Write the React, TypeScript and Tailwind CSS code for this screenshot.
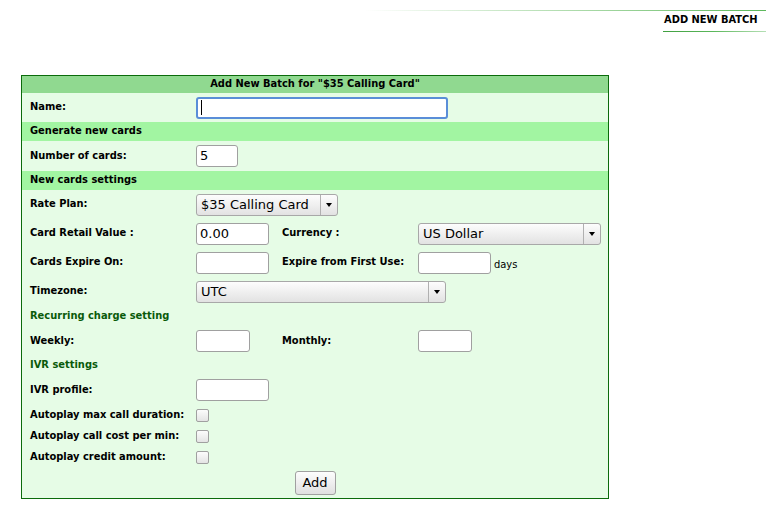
import React from "react";

const F = { fontFamily: '"DejaVu Sans Condensed", "DejaVu Sans", sans-serif' };
const FI = { fontFamily: '"DejaVu Sans", sans-serif' };

function Label({ children }: { children: React.ReactNode }) {
  return (
    <div className="w-[170px] shrink-0 pl-[8px] text-[11px] font-bold text-black">{children}</div>
  );
}

function TextInput({ w, value }: { w: string; value?: string }) {
  return (
    <div
      className={`${w} h-[22px] shrink-0 rounded-[3px] border border-[#a0a0a0] bg-white pl-[3px] text-[13px] leading-[20px] text-black`}
      style={FI}
    >
      {value}
    </div>
  );
}

function Select({ w, value, divider }: { w: string; value: string; divider: string }) {
  return (
    <div
      className={`${w} flex h-[22px] shrink-0 items-center rounded-[3px] border border-[#a8a8a8] bg-gradient-to-b from-[#fdfdfd] to-[#e2e2e2] text-[13px] text-black`}
      style={FI}
    >
      <div className="flex-1 pl-[4px] leading-[20px]">{value}</div>
      <div className={`${divider} flex h-full items-center justify-center border-l border-[#b0b0b0]`}>
        <div className="h-0 w-0 border-x-[3.5px] border-t-[4px] border-x-transparent border-t-black" />
      </div>
    </div>
  );
}

function Check() {
  return (
    <div className="ml-[4px] h-[13px] w-[13px] rounded-[2px] border border-[#a0a0a0] bg-gradient-to-b from-[#fcfcfc] to-[#e4e4e4]" />
  );
}

function Row({ h, children, bg = "bg-[#e6fce6]" }: { h: string; children: React.ReactNode; bg?: string }) {
  return <div className={`flex ${h} items-center ${bg}`}>{children}</div>;
}

function Section({ children, h = "h-[19px]" }: { children: React.ReactNode; h?: string }) {
  return (
    <div className={`flex ${h} items-center bg-[#a2f5a2] pl-[8px] text-[11px] font-bold text-black`}>
      {children}
    </div>
  );
}

function SubSection({ children, h }: { children: React.ReactNode; h: string }) {
  return (
    <div className={`flex ${h} items-center bg-[#e6fce6] pl-[8px] text-[11px] font-bold text-[#0a5a0a]`}>
      {children}
    </div>
  );
}

export default function App() {
  return (
    <div className="min-h-[516px] w-[766px] bg-white pt-[10px]" style={F}>
      <div className="ml-[365px] h-px bg-gradient-to-r from-white to-[#5cb85c]" />
      <div className="mt-[2px] flex justify-end">
        <div className="w-[103px]">
          <div className="pb-[5px] pl-px text-[11px] font-bold leading-[13px] text-black">ADD NEW BATCH</div>
          <div className="h-px bg-gradient-to-r from-[#3f9f3f] via-[#5cb85c] to-[#b5e0b5]" />
        </div>
      </div>

      <div className="ml-[21px] mt-[43px] w-[588px] border border-[#0b6b0b] bg-[#e6fce6]">
        <div className="flex h-[17px] items-center justify-center bg-[#90d990] text-[11px] font-bold text-black">
          Add New Batch for "$35 Calling Card"
        </div>
        <Row h="h-[29px]">
          <Label>Name:</Label>
          <div className="ml-[4px] flex h-[22px] w-[252px] items-center rounded-[3px] border-2 border-[#5a8ed8] bg-white pl-[3px]">
            <div className="h-[15px] w-px bg-black" />
          </div>
        </Row>
        <Section>Generate new cards</Section>
        <Row h="h-[30px]">
          <Label>Number of cards:</Label>
          <div className="ml-[4px]">
            <TextInput w="w-[42px]" value="5" />
          </div>
        </Row>
        <Section>New cards settings</Section>
        <Row h="h-[29px]">
          <Label>Rate Plan:</Label>
          <div className="ml-[4px]">
            <Select w="w-[142px]" value="$35 Calling Card" divider="w-[17px]" />
          </div>
        </Row>
        <Row h="h-[29px]">
          <Label>Card Retail Value :</Label>
          <div className="ml-[4px] w-[86px]">
            <TextInput w="w-[73px]" value="0.00" />
          </div>
          <div className="w-[136px] text-[11px] font-bold text-black">Currency :</div>
          <Select w="w-[183px]" value="US Dollar" divider="w-[17px]" />
        </Row>
        <Row h="h-[29px]">
          <Label>Cards Expire On:</Label>
          <div className="ml-[4px] w-[86px]">
            <TextInput w="w-[73px]" />
          </div>
          <div className="w-[136px] text-[11px] font-bold text-black">Expire from First Use:</div>
          <TextInput w="w-[73px]" />
          <div className="ml-[3px] mt-[6px] text-[11px] text-black">days</div>
        </Row>
        <Row h="h-[29px]">
          <Label>Timezone:</Label>
          <div className="ml-[4px]">
            <Select w="w-[250px]" value="UTC" divider="w-[17px]" />
          </div>
        </Row>
        <SubSection h="h-[20px]">Recurring charge setting</SubSection>
        <Row h="h-[30px]">
          <Label>Weekly:</Label>
          <div className="ml-[4px] w-[86px]">
            <TextInput w="w-[54px]" />
          </div>
          <div className="w-[136px] text-[11px] font-bold text-black">Monthly:</div>
          <TextInput w="w-[54px]" />
        </Row>
        <SubSection h="h-[19px]">IVR settings</SubSection>
        <Row h="h-[30px]">
          <Label>IVR profile:</Label>
          <div className="ml-[4px]">
            <TextInput w="w-[73px]" />
          </div>
        </Row>
        <Row h="h-[21px]">
          <Label>Autoplay max call duration:</Label>
          <Check />
        </Row>
        <Row h="h-[21px]">
          <Label>Autoplay call cost per min:</Label>
          <Check />
        </Row>
        <Row h="h-[21px]">
          <Label>Autoplay credit amount:</Label>
          <Check />
        </Row>
        <div className="flex h-[30px] items-center justify-center">
          <button
            className="h-[24px] w-[41px] rounded-[3px] border border-[#a0a0a0] bg-gradient-to-b from-[#fdfdfd] to-[#e0e0e0] text-[13px] text-black"
            style={FI}
          >
            Add
          </button>
        </div>
      </div>
    </div>
  );
}
